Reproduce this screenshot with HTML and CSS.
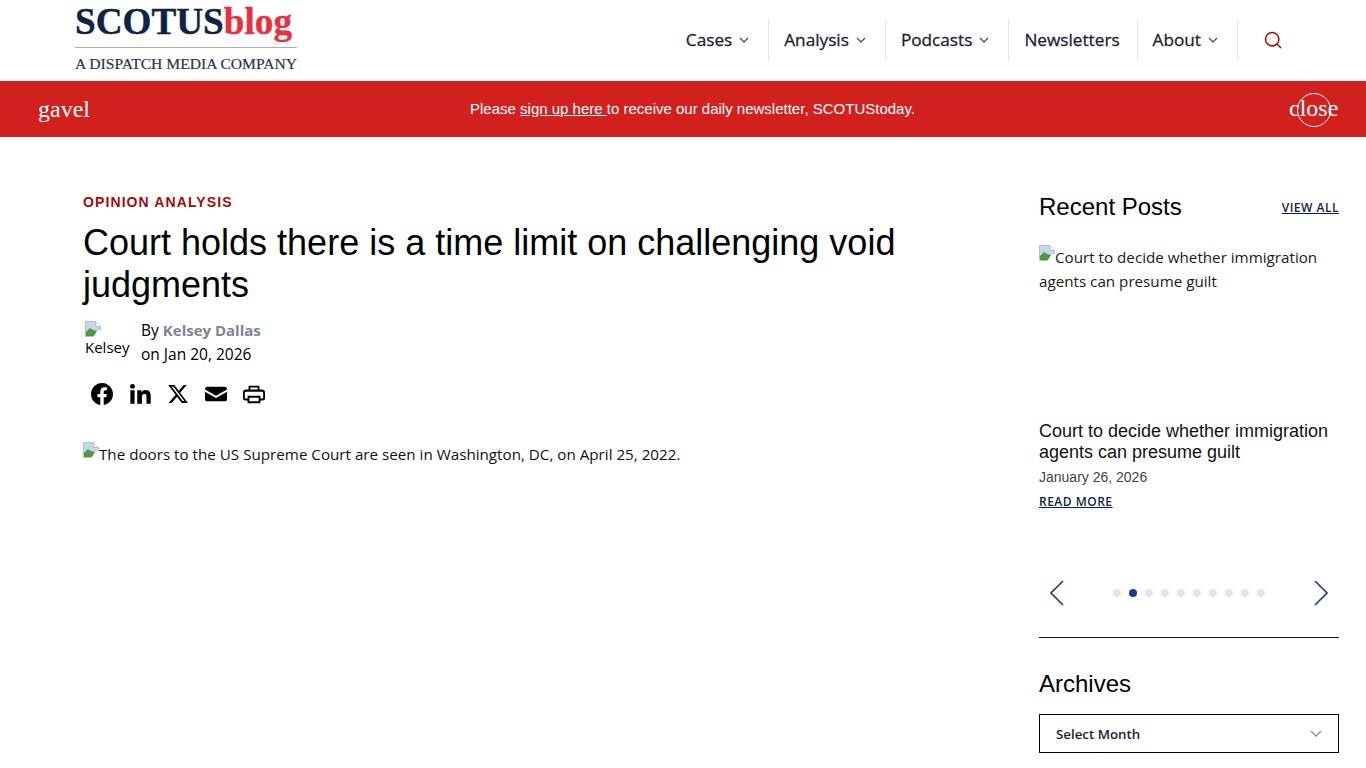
FILE: index.html
```html
<!DOCTYPE html>
<html lang="en">
<head>
    <meta charset="UTF-8">
    <meta name="viewport" content="width=device-width, initial-scale=1.0">
    <title>Court holds there is a time limit on challenging void judgments</title>
    <link rel="stylesheet" href="styles.css">
</head>
<body>
    <svg class="defs" width="0" height="0">
        <symbol id="broken" viewBox="0 0 16 16">
            <path d="M.5 .5h10l5 5v10H.5z" fill="#fff" stroke="#b9bcc1"/>
            <path d="M10.500 .5v5h5" fill="#f1f2f4" stroke="#b9bcc1"/>
            <path d="M1 1h9v5h5v3l-5 2-3 4H1z" fill="#c3d6f3"/>
            <path d="M1 15v-4l4-4 3 2 4 1-3 5z" fill="#4f9a3c"/>
            <path d="M16 8.500 8 16h8z" fill="#fff"/>
        </symbol>
    </svg>

    <header class="site-header">
        <a class="logo" href="#">
            <span class="logo-name">SCOTUS<span class="logo-blog">blog</span></span>
            <span class="logo-sub">A DISPATCH MEDIA COMPANY</span>
        </a>
        <nav class="nav">
            <a class="nav-item" href="#">Cases <svg class="chev" viewBox="0 0 10 6"><path d="M1 1l4 4 4-4"/></svg></a>
            <a class="nav-item" href="#">Analysis <svg class="chev" viewBox="0 0 10 6"><path d="M1 1l4 4 4-4"/></svg></a>
            <a class="nav-item" href="#">Podcasts <svg class="chev" viewBox="0 0 10 6"><path d="M1 1l4 4 4-4"/></svg></a>
            <a class="nav-item nav-plain" href="#">Newsletters</a>
            <a class="nav-item" href="#">About <svg class="chev" viewBox="0 0 10 6"><path d="M1 1l4 4 4-4"/></svg></a>
            <a class="nav-search" href="#" aria-label="Search">
                <svg viewBox="0 0 18 18" width="18" height="18"><circle cx="8.200" cy="8.200" r="6.700"/><path d="M13 13l4 4"/></svg>
            </a>
        </nav>
    </header>

    <div class="banner">
        <span class="banner-icon">gavel</span>
        <p class="banner-text">Please <a href="#">sign up here </a>to receive our daily newsletter, SCOTUStoday.</p>
        <span class="banner-close">close</span>
    </div>

    <div class="page">
        <main class="article">
            <div class="kicker">OPINION ANALYSIS</div>
            <h1>Court holds there is a time limit on challenging void judgments</h1>
            <div class="byline">
                <div class="avatar"><svg class="broken"><use href="#broken"/></svg><span>Kelsey</span></div>
                <div class="byline-text">
                    <div>By <a href="#">Kelsey Dallas</a></div>
                    <div>on Jan 20, 2026</div>
                </div>
            </div>
            <div class="share">
                <svg viewBox="0 0 24 24"><path d="M24 12.070C24 5.400 18.630 0 12 0S0 5.400 0 12.070c0 6.030 4.390 11.020 10.130 11.930v-8.440H7.080v-3.490h3.050V9.410c0-3.020 1.790-4.690 4.530-4.690 1.310 0 2.690.24 2.690.24v2.970h-1.510c-1.490 0-1.960.93-1.960 1.890v2.250h3.330l-.53 3.490h-2.800V24C19.610 23.090 24 18.100 24 12.070z"/></svg>
                <svg viewBox="0 0 24 24"><path d="M1.500 8h4.600v14.500H1.500zM3.800 1a2.700 2.700 0 1 1 0 5.400 2.700 2.700 0 0 1 0-5.400zM9 8h4.400v2c.7-1.200 2.300-2.400 4.600-2.400 4.800 0 5.700 3.100 5.700 7.200v7.700h-4.600v-6.800c0-1.700 0-3.800-2.300-3.800s-2.700 1.800-2.700 3.700v6.900H9z"/></svg>
                <svg viewBox="0 0 24 24"><path d="M18.240 2.250h3.310l-7.230 8.260 8.500 11.240H16.170l-5.210-6.820-5.970 6.820H1.680l7.730-8.840L1.250 2.250H8.080l4.710 6.230zm-1.160 17.520h1.830L7.080 4.130H5.120z"/></svg>
                <svg viewBox="0 0 24 24"><path d="M2.500 4h19A2.500 2.500 0 0 1 24 6.500v.6l-12 6.800L0 7.100v-.6A2.500 2.500 0 0 1 2.500 4zM0 9.600l12 6.700 12-6.700v8A2.500 2.500 0 0 1 21.500 20h-19A2.500 2.500 0 0 1 0 17.600z"/></svg>
                <svg viewBox="0 0 24 24"><path fill-rule="evenodd" d="M6 3h12v4h2.500A3.500 3.500 0 0 1 24 10.500v6a2.500 2.500 0 0 1-2.500 2.500H19v3H5v-3H2.500A2.500 2.500 0 0 1 0 16.500v-6A3.500 3.500 0 0 1 3.500 7H6zm2 2v2h8V5zM3.500 9.500A1.500 1.500 0 0 0 2 11v5a1 1 0 0 0 1 1h2v-3h14v3h2a1 1 0 0 0 1-1v-5a1.500 1.500 0 0 0-1.500-1.500zM7 16v4h10v-4z"/></svg>
            </div>
            <div class="hero-alt"><svg class="broken"><use href="#broken"/></svg>The doors to the US Supreme Court are seen in Washington, DC, on April 25, 2022.</div>
        </main>

        <aside class="sidebar">
            <div class="side-head">
                <h2>Recent Posts</h2>
                <a class="view-all" href="#">VIEW ALL</a>
            </div>
            <div class="post-thumb"><svg class="broken"><use href="#broken"/></svg>Court to decide whether immigration agents can presume guilt</div>
            <h3 class="post-title">Court to decide whether immigration agents can presume guilt</h3>
            <div class="post-date">January 26, 2026</div>
            <a class="read-more" href="#">READ MORE</a>
            <div class="carousel">
                <svg class="arrow" viewBox="0 0 14 26"><path d="M13 1L1 13l12 12"/></svg>
                <div class="dots">
                    <i></i><i class="on"></i><i></i><i></i><i></i><i></i><i></i><i></i><i></i><i></i>
                </div>
                <svg class="arrow" viewBox="0 0 14 26"><path d="M1 1l12 12L1 25"/></svg>
            </div>
            <h2 class="archives">Archives</h2>
            <div class="month-select">
                <span>Select Month</span>
                <svg class="select-chev" viewBox="0 0 12 7"><path d="M1 1l5 5 5-5"/></svg>
            </div>
        </aside>
    </div>
</body>
</html>
```

FILE: styles.css
```css
* {
    padding: 0;
    margin: 0;
    box-sizing: border-box;
}
html, body {
    height: 768px;
    overflow: hidden;
}
body {
    background-color: #fff;
    color: #000;
    font-family: "Open Sans", "Noto Sans", sans-serif;
    font-size: 15.2px;
}
a {
    color: inherit;
    text-decoration: none;
}
.defs {
    display: block;
    height: 0;
}
.broken {
    width: 16px;
    height: 16px;
    vertical-align: 2px;
}

/* header */
.site-header {
    height: 81px;
    padding: 0 65px 0 75px;
    display: flex;
    justify-content: space-between;
}
.logo {
    width: 222px;
    display: flex;
    flex-direction: column;
}
.logo-name {
    height: 48px;
    padding-top: 1px;
    border-bottom: 1px solid #a9adb3;
    color: #0f2347;
    font-family: "Liberation Serif", serif;
    font-size: 37.2px;
    font-weight: 700;
    line-height: 41px;
    -webkit-text-stroke: .4px;
    white-space: nowrap;
}
.logo-blog {
    color: #e8313f;
}
.logo-sub {
    margin-top: 7px;
    color: #2b3448;
    font-family: "Liberation Serif", serif;
    font-size: 15.6px;
    line-height: 18px;
    -webkit-text-stroke: .2px;
    white-space: nowrap;
}
.nav {
    display: flex;
    align-items: center;
    height: 40px;
    margin-top: 20px;
}
.nav-item {
    height: 40px;
    display: flex;
    align-items: center;
    gap: 7px;
    padding: 0 19px 1px 15px;
    border-right: 1px solid #e4e5e7;
    color: #1a2233;
    font-size: 17.2px;
    -webkit-text-stroke: .3px;
    white-space: nowrap;
}
.nav-plain {
    padding-right: 17px;
}
.chev {
    width: 10px;
    height: 6px;
    fill: none;
    stroke: #4a5160;
    stroke-width: 1.3;
}
.nav-search {
    width: 63px;
    padding-left: 26px;
    display: flex;
}
.nav-search svg {
    fill: none;
    stroke: #a80f12;
    stroke-width: 1.6;
}

/* newsletter banner */
.banner {
    height: 56px;
    background-color: #d2201e;
    color: #fff;
    display: flex;
    align-items: center;
    padding: 0 29px 0 38px;
    font-family: "Liberation Sans", sans-serif;
}
.banner-icon {
    width: 51px;
    font-family: "Liberation Serif", serif;
    font-size: 24px;
}
.banner-text {
    flex: 1;
    padding: 0 0 2px 381px;
    font-size: 15px;
}
.banner-text a {
    text-decoration: underline;
}
.banner-close {
    width: 48px;
    height: 32px;
    line-height: 30px;
    text-align: center;
    font-family: "Liberation Serif", serif;
    font-size: 24px;
    position: relative;
}
.banner-close::after {
    content: "";
    position: absolute;
    left: 8px;
    top: 0;
    width: 32px;
    height: 32px;
    border: 1px solid #fff;
    border-radius: 50%;
}

/* page columns */
.page {
    display: flex;
    justify-content: space-between;
    padding: 0 27px 0 83px;
}
.article {
    width: 860px;
    padding-top: 55px;
}
.kicker {
    color: #a30b0f;
    font-family: "Liberation Sans", sans-serif;
    font-size: 14px;
    font-weight: 700;
    letter-spacing: 1.1px;
    line-height: 20px;
}
h1 {
    margin-top: 10px;
    font-family: "Liberation Sans", sans-serif;
    font-size: 36px;
    font-weight: 400;
    line-height: 42px;
}
.byline {
    display: flex;
    margin-top: 12px;
    height: 48px;
}
.avatar {
    width: 48px;
    margin-left: 2px;
    margin-right: 8px;
    padding-top: 3px;
    font-size: 15px;
    line-height: 20px;
}
.avatar svg {
    display: block;
}
.byline-text {
    line-height: 24px;
    font-size: 15.5px;
}
.byline-text a {
    color: #7b8594;
    font-size: 15px;
    font-weight: 700;
}
.share {
    display: flex;
    gap: 16px;
    margin: 17px 0 0 8px;
}
.share svg {
    width: 22px;
    height: 22px;
}
.hero-alt {
    margin-top: 37px;
    height: 24px;
    line-height: 24px;
    color: #111;
}

/* sidebar */
.sidebar {
    width: 300px;
    padding-top: 55px;
}
.side-head {
    display: flex;
    justify-content: space-between;
    align-items: center;
    height: 30px;
}
h2 {
    font-family: "Liberation Sans", sans-serif;
    font-size: 24px;
    font-weight: 400;
    line-height: 30px;
}
.view-all, .read-more {
    color: #0f2347;
    font-size: 12px;
    font-weight: 600;
    letter-spacing: .5px;
    text-decoration: underline;
}
.post-thumb {
    margin-top: 23px;
    height: 176px;
    line-height: 24px;
    color: #1a1a1a;
}
.post-title {
    color: #111;
    font-family: "Liberation Sans", sans-serif;
    font-size: 18px;
    font-weight: 400;
    line-height: 21px;
}
.post-date {
    margin-top: 4px;
    color: #444;
    font-family: "Liberation Sans", sans-serif;
    font-size: 14px;
    line-height: 20px;
}
.read-more {
    display: block;
    margin-top: 5px;
    line-height: 20px;
}
.carousel {
    display: flex;
    align-items: center;
    justify-content: space-between;
    height: 70px;
    margin-top: 56px;
    padding: 0 11px 20px 11px;
    border-bottom: 1px solid #111;
}
.arrow {
    width: 14px;
    height: 26px;
    fill: none;
    stroke: #24407f;
    stroke-width: 1.7;
}
.dots {
    display: flex;
    gap: 8px;
}
.dots i {
    display: block;
    width: 8px;
    height: 8px;
    border-radius: 50%;
    background-color: #e6e7ea;
}
.dots i.on {
    background-color: #1f3a8a;
}
.archives {
    margin-top: 31px;
}
.month-select {
    margin-top: 15px;
    height: 39px;
    border: 1px solid #000;
    padding: 0 16px;
    display: flex;
    align-items: center;
    justify-content: space-between;
    color: #1a2233;
    font-size: 13.3px;
    font-weight: 600;
}
.select-chev {
    width: 12px;
    height: 7px;
    fill: none;
    stroke: #9a9a9a;
    stroke-width: 1.6;
}
```
